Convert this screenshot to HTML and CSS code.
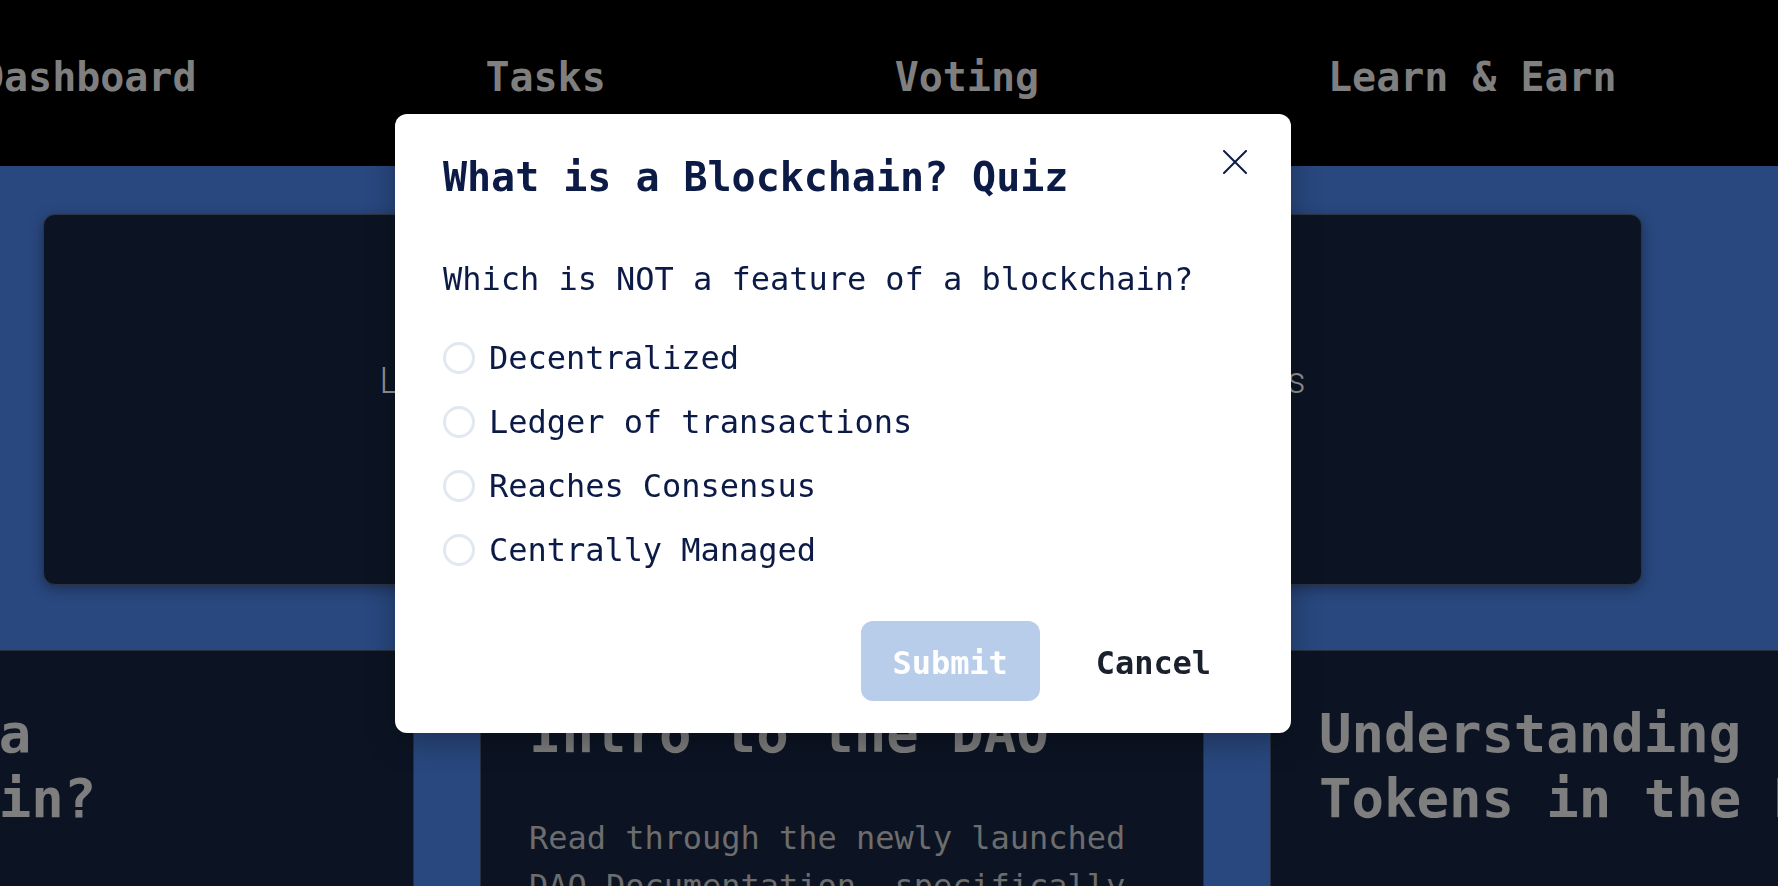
FILE: index.html
```html
<!DOCTYPE html>
<html lang="en">
<head>
<meta charset="utf-8">
<title>Learn &amp; Earn</title>
<link rel="stylesheet" href="styles.css">
</head>
<body>
  <header class="nav">
    <nav class="nav-links">
      <a class="nav-link" href="#">Dashboard</a>
      <a class="nav-link" href="#">Tasks</a>
      <a class="nav-link" href="#">Voting</a>
      <a class="nav-link" href="#">Learn &amp; Earn</a>
    </nav>
  </header>

  <section class="hero">
    <div class="hero-card">
      <p class="hero-text">Learn about the DAO and earn tokens for quizzes</p>
    </div>
  </section>

  <section class="courses">
    <article class="course">
      <h3 class="course-title">What is a Blockchain?</h3>
      <p class="course-text">Learn the basics of distributed ledgers and how they power the DAO.</p>
    </article>
    <article class="course">
      <h3 class="course-title">Intro to the DAO</h3>
      <p class="course-text">Read through the newly launched DAO Documentation, specifically the sections on governance.</p>
    </article>
    <article class="course">
      <h3 class="course-title">Understanding Tokens in the DAO</h3>
      <p class="course-text">Discover how tokens are earned, spent and used for voting.</p>
    </article>
  </section>

  <div class="overlay">
    <div class="modal" role="dialog" aria-modal="true">
      <div class="modal-header">
        <h2 class="modal-title">What is a Blockchain? Quiz</h2>
        <button class="close-btn" aria-label="Close">
          <svg width="24" height="24" viewBox="0 0 24 24" fill="none" stroke="currentColor" stroke-width="2" stroke-linecap="round">
            <line x1="1" y1="1" x2="23" y2="23"/>
            <line x1="23" y1="1" x2="1" y2="23"/>
          </svg>
        </button>
      </div>
      <div class="modal-body">
        <p class="question">Which is NOT a feature of a blockchain?</p>
        <div class="options">
          <label class="option"><span class="radio"></span><span class="option-label">Decentralized</span></label>
          <label class="option"><span class="radio"></span><span class="option-label">Ledger of transactions</span></label>
          <label class="option"><span class="radio"></span><span class="option-label">Reaches Consensus</span></label>
          <label class="option"><span class="radio"></span><span class="option-label">Centrally Managed</span></label>
        </div>
      </div>
      <div class="modal-footer">
        <button class="btn btn-submit" disabled>Submit</button>
        <button class="btn btn-cancel">Cancel</button>
      </div>
    </div>
  </div>
</body>
</html>
```

FILE: styles.css
```css
* {
  box-sizing: border-box;
}

html, body {
  margin: 0;
  padding: 0;
  height: 100%;
}

body {
  background: #29487f;
  font-family: "DejaVu Sans Mono", "Liberation Mono", monospace;
  letter-spacing: -0.002em;
  overflow: hidden;
}

/* ---------- top navigation ---------- */
.nav {
  height: 166px;
  background: #000000;
  padding-top: 53px;
  overflow: hidden;
}

.nav-links {
  display: flex;
  gap: 289px;
  margin-left: -20px;
}

.nav-link {
  font-size: 40px;
  line-height: 48px;
  font-weight: bold;
  color: #7f7f7f;
  text-decoration: none;
  white-space: nowrap;
}

/* ---------- hero ---------- */
.hero {
  height: 484px;
  padding: 48px 0 0 43px;
  background: #29487f;
}

.hero-card {
  width: 1599px;
  height: 371px;
  background: #0c1424;
  border: 1px solid #2d3443;
  border-radius: 12px;
  box-shadow: 0 4px 14px rgba(0, 0, 0, 0.35);
  padding-top: 139px;
  display: flex;
  justify-content: center;
}

.hero-text {
  margin: 0;
  width: 926px;
  font-family: Roboto, "Noto Sans", sans-serif;
  font-weight: 300;
  letter-spacing: normal;
  font-size: 36px;
  line-height: 54px;
  color: #939393;
  text-align: justify;
  text-align-last: justify;
}

/* ---------- course cards ---------- */
.courses {
  display: flex;
  gap: 66px;
  margin-left: -310px;
  height: 236px;
  background: #29487f;
}

.course {
  flex: 0 0 724px;
  background: #0c1424;
  border: 1px solid #283040;
  border-bottom: none;
  padding: 51px 48px 0;
}

.course-title {
  margin: 0;
  font-size: 54px;
  line-height: 1.2;
  font-weight: bold;
  color: #7e7e7e;
}

.course-text {
  margin: 47px 0 0;
  font-size: 32px;
  line-height: 48px;
  color: #6d6d6d;
}

/* ---------- modal ---------- */
.overlay {
  position: fixed;
  inset: 0;
  padding: 114px 0 0 395px;
}

.modal {
  width: 896px;
  background: #ffffff;
  border-radius: 12px;
  box-shadow: 0 10px 30px rgba(0, 0, 0, 0.3);
  color: #0c1a46;
}

.modal-header {
  position: relative;
  padding: 39px 48px 0;
}

.modal-title {
  margin: 0;
  font-size: 40px;
  line-height: 48px;
  font-weight: bold;
  color: #0c1a46;
}

.close-btn {
  position: absolute;
  top: 24px;
  right: 32px;
  width: 48px;
  height: 48px;
  padding: 0;
  border: none;
  background: transparent;
  color: #0c1a46;
  display: flex;
  align-items: center;
  justify-content: center;
}

.modal-body {
  padding: 54px 48px 0;
}

.question {
  margin: 0;
  font-size: 32px;
  line-height: 48px;
}

.options {
  margin-top: 31px;
  display: flex;
  flex-direction: column;
  gap: 16px;
}

.option {
  display: flex;
  align-items: center;
  height: 48px;
}

.radio {
  width: 32px;
  height: 32px;
  border: 3px solid #e2e8f0;
  border-radius: 50%;
  margin-right: 14px;
  flex: none;
}

.option-label {
  font-size: 32px;
  line-height: 48px;
  white-space: nowrap;
}

.modal-footer {
  display: flex;
  justify-content: flex-end;
  gap: 24px;
  padding: 47px 48px 32px;
}

.btn {
  height: 80px;
  padding: 4px 32px 0;
  border: none;
  border-radius: 12px;
  font-family: "DejaVu Sans Mono", "Liberation Mono", monospace;
  letter-spacing: -0.002em;
  font-size: 32px;
  line-height: 48px;
  font-weight: bold;
  display: flex;
  align-items: center;
}

.btn-submit {
  background: #b7cdea;
  color: #ffffff;
}

.btn-cancel {
  background: transparent;
  color: #1a202c;
}
```
